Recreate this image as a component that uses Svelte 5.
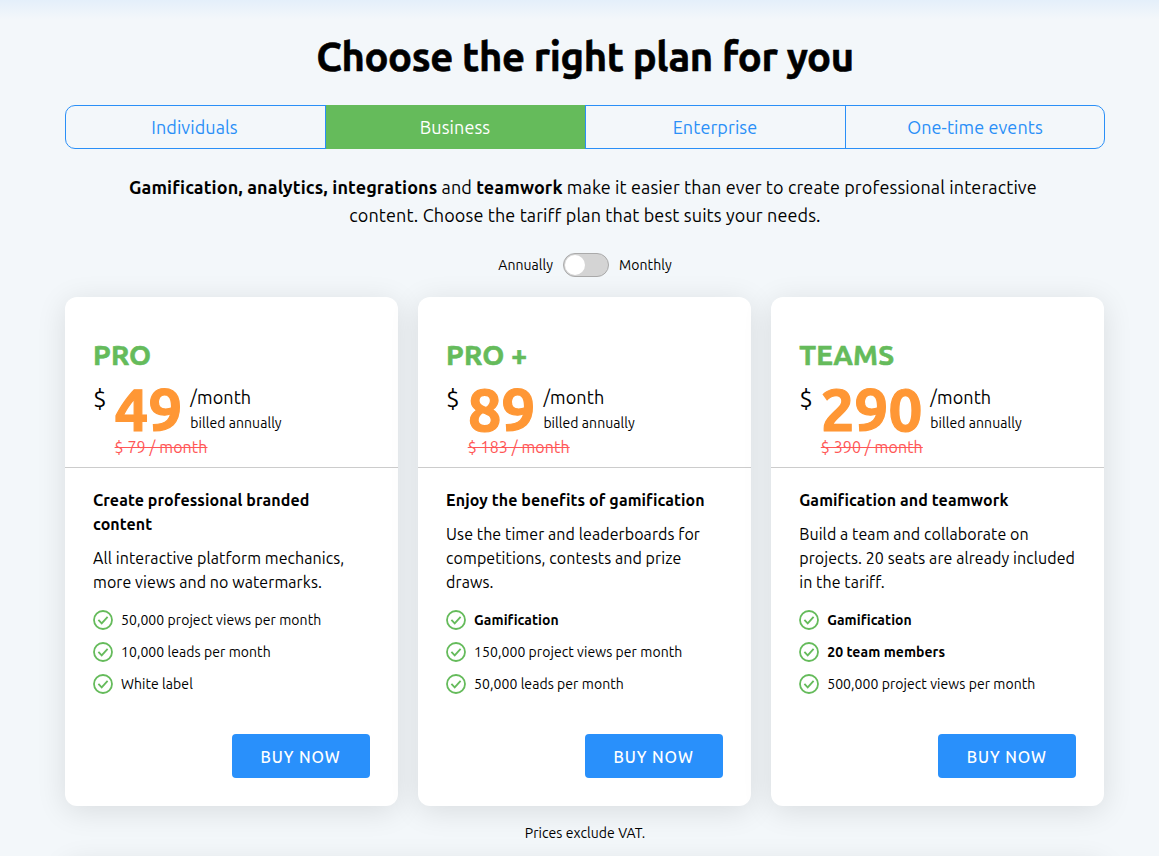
<script>
	// DATA
	const tabs = ['Individuals', 'Business', 'Enterprise', 'One-time events'];

	const plans = [
		{
			name: 'PRO',
			price: 49,
			oldPrice: 79,
			title: 'Create professional branded content',
			text: 'All interactive platform mechanics, more views and no watermarks.',
			features: [
				{ label: '50,000 project views per month' },
				{ label: '10,000 leads per month' },
				{ label: 'White label' }
			]
		},
		{
			name: 'PRO +',
			price: 89,
			oldPrice: 183,
			title: 'Enjoy the benefits of gamification',
			text: 'Use the timer and leaderboards for competitions, contests and prize draws.',
			features: [
				{ label: 'Gamification', bold: true },
				{ label: '150,000 project views per month' },
				{ label: '50,000 leads per month' }
			]
		},
		{
			name: 'TEAMS',
			price: 290,
			oldPrice: 390,
			title: 'Gamification and teamwork',
			text: 'Build a team and collaborate on projects. 20 seats are already included in the tariff.',
			features: [
				{ label: 'Gamification', bold: true },
				{ label: '20 team members', bold: true },
				{ label: '500,000 project views per month' }
			]
		}
	];

	let activeTab = 'Business';
	let monthly = false;
</script>

<style>
  :global(html) {
    overflow: hidden;
  }
  :global(body) {
    margin: 0;
    background: #f3f7fa;
  }
  .pricing {
    box-sizing: border-box;
    height: 856px;
    overflow: hidden;
    padding: 30px 54px 0 65px;
    font-family: Ubuntu, 'Noto Sans', 'Open Sans', sans-serif;
    color: #000;
    background: linear-gradient(#e4effa, #f3f7fa 19px);
  }
  h1 {
    margin: 0;
    font-size: 40px;
    line-height: 54px;
    font-weight: 700;
    letter-spacing: -0.38px;
    text-align: center;
    -webkit-text-stroke: 0.6px #000;
  }
  .tabs {
    display: flex;
    box-sizing: border-box;
    height: 44px;
    margin-top: 21px;
    border: 1px solid #2a8ff7;
    border-radius: 10px;
  }
  .tab {
    box-sizing: border-box;
    flex: 0 0 260px;
    margin: -1px 0;
    padding: 0 1px 0 0;
    border: none;
    background: none;
    font-family: inherit;
    font-size: 18px;
    letter-spacing: 0.1px;
    color: #2a8ff7;
  }
  .tab:first-child {
    margin-left: -1px;
  }
  .tab + .tab {
    border-left: 1px solid #2a8ff7;
  }
  .tab.active {
    background: #65bb5b;
    color: #fff;
  }
  .lead {
    margin: 24px 0 0;
    font-size: 18px;
    line-height: 28px;
    letter-spacing: 0.12px;
    text-align: center;
    white-space: nowrap;
  }
  .period {
    display: flex;
    justify-content: center;
    align-items: center;
    height: 24px;
    margin-top: 24px;
    font-size: 14px;
    letter-spacing: 0.06px;
  }
  .switch {
    box-sizing: border-box;
    width: 46px;
    height: 24px;
    margin: 0 10px;
    padding: 1px;
    border: 1px solid #aaa;
    border-radius: 12px;
    background: #d4d4d4;
  }
  .knob {
    display: block;
    width: 20px;
    height: 20px;
    border-radius: 50%;
    background: #fff;
  }
  .switch.on .knob {
    margin-left: auto;
  }
  .cards {
    display: grid;
    grid-template-columns: repeat(3, 333.1px);
    gap: 20px;
    margin-top: 20px;
  }
  .card {
    display: flex;
    flex-direction: column;
    height: 509px;
    border-radius: 12px;
    background: #fff;
    box-shadow: 0 5px 30px rgba(0, 0, 0, 0.11);
  }
  .head {
    box-sizing: border-box;
    height: 171px;
    padding: 42px 28px 0;
    border-bottom: 1px solid #ccc;
  }
  h2 {
    margin: 0;
    font-size: 28px;
    line-height: 32px;
    letter-spacing: 0.2px;
    color: #65bb5b;
    -webkit-text-stroke: 0.6px #65bb5b;
  }
  .price {
    display: flex;
    height: 61px;
    margin-top: 5px;
  }
  .currency {
    width: 21.6px;
    font-size: 24px;
    line-height: 46px;
  }
  .amount {
    font-size: 60px;
    line-height: 66px;
    font-weight: 700;
    color: #ff9735;
    -webkit-text-stroke: 1.2px #ff9735;
  }
  .term {
    display: flex;
    flex-direction: column;
    margin-left: 8px;
    padding-top: 8px;
    font-size: 18px;
    line-height: 26px;
    letter-spacing: 0.1px;
  }
  .term small {
    padding-top: 1px;
    font-size: 14px;
    line-height: 24px;
    letter-spacing: 0.06px;
  }
  .old {
    margin-left: 21.6px;
    font-size: 16px;
    line-height: 20px;
    letter-spacing: 0.1px;
    color: #ff5757;
    text-decoration: line-through;
  }
  .body {
    display: flex;
    flex: 1;
    flex-direction: column;
    padding: 20px 28px 28px;
  }
  h3 {
    margin: 0;
    font-size: 16px;
    line-height: 24px;
    letter-spacing: 0.09px;
  }
  .text {
    margin: 10px 0 0;
    font-size: 16px;
    line-height: 24px;
    letter-spacing: 0.08px;
  }
  ul {
    display: flex;
    flex-direction: column;
    gap: 12px;
    margin: 16px 0 0;
    padding: 0;
    list-style: none;
  }
  li {
    display: flex;
    align-items: center;
    gap: 8px;
    height: 20px;
    font-size: 14px;
    letter-spacing: 0.06px;
    white-space: nowrap;
  }
  li.bold {
    font-weight: 700;
  }
  .buy {
    align-self: flex-end;
    width: 138px;
    height: 44px;
    margin-top: auto;
    padding: 1px 1px 0 0;
    border: none;
    border-radius: 4px;
    background: #2990fb;
    font-family: inherit;
    font-size: 16px;
    font-weight: 500;
    letter-spacing: 0.9px;
    color: #fff;
  }
  .vat {
    margin: 17px 0 0;
    font-size: 14px;
    line-height: 20px;
    letter-spacing: 0.06px;
    text-align: center;
  }
  .next {
    height: 80px;
    margin-top: 17px;
    border-radius: 12px;
    background: #fff;
    box-shadow: 0 5px 30px rgba(0, 0, 0, 0.11);
  }
</style>

<div class="pricing">
  <h1>Choose the right plan for you</h1>

  <div class="tabs">
    {#each tabs as tab}
      <button class="tab" class:active={tab === activeTab} on:click={() => activeTab = tab}>{tab}</button>
    {/each}
  </div>

  <p class="lead">
    <b>Gamification, analytics, integrations</b> and <b>teamwork</b> make it easier than ever to create professional interactive&nbsp;<br>
    content. Choose the tariff plan that best suits your needs.
  </p>

  <div class="period">
    <span>Annually</span>
    <button class="switch" class:on={monthly} aria-label="Billing period" on:click={() => monthly = !monthly}>
      <span class="knob"></span>
    </button>
    <span>Monthly</span>
  </div>

  <div class="cards">
    {#each plans as plan}
      <div class="card">
        <div class="head">
          <h2>{plan.name}</h2>
          <div class="price">
            <span class="currency">$</span>
            <span class="amount">{plan.price}</span>
            <span class="term">/month<small>billed annually</small></span>
          </div>
          <div class="old">$ {plan.oldPrice} / month</div>
        </div>
        <div class="body">
          <h3>{plan.title}</h3>
          <p class="text">{plan.text}</p>
          <ul>
            {#each plan.features as feature}
              <li class:bold={feature.bold}>
                <svg width="20" height="20" viewBox="0 0 20 20" fill="none" stroke="#65bb5b" stroke-width="1.8">
                  <circle cx="10" cy="10" r="9" />
                  <path d="M5.4 9.8l3.3 3.5 5.9-6.5" />
                </svg>
                <span>{feature.label}</span>
              </li>
            {/each}
          </ul>
          <button class="buy">BUY NOW</button>
        </div>
      </div>
    {/each}
  </div>

  <p class="vat">Prices exclude VAT.</p>
  <div class="next"></div>
</div>
